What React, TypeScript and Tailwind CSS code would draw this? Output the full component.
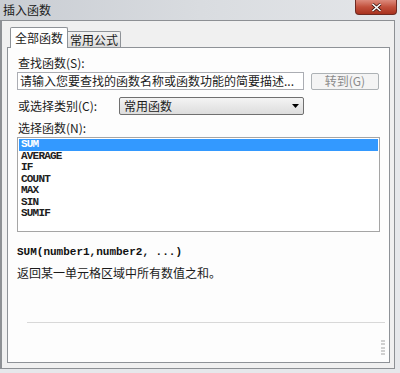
const uiFont = { fontFamily: '"Noto Sans CJK SC", "Liberation Sans", sans-serif' };

const functions = ['SUM', 'AVERAGE', 'IF', 'COUNT', 'MAX', 'SIN', 'SUMIF'];

export default function App() {
  return (
    <div
      className="w-[400px] h-[373px] bg-[#e6e8eb] flex flex-col overflow-hidden text-[12px] text-[#1b1b1b]"
      style={uiFont}
    >
      {/* title bar */}
      <div className="h-[20px] flex items-start justify-between bg-gradient-to-r from-[#c9cdd3] via-[#d9dce0] to-[#e4e6e9]">
        <span className="pl-[3px] pt-[2px] leading-[16px] text-[12px] text-[#202020]">插入函数</span>
        <div className="mr-[3px] w-[42px] h-[15px] flex items-center justify-center rounded-b-[4px] border border-t-0 border-[#6e2a22] bg-gradient-to-b from-[#dc8a7c] via-[#c2503c] to-[#a8321f]">
          <svg width="11" height="9" viewBox="0 0 11 9">
            <path d="M1.5 1 L9.5 8 M9.5 1 L1.5 8" stroke="#3b1510" strokeWidth="3" />
            <path d="M1.5 1 L9.5 8 M9.5 1 L1.5 8" stroke="#ffffff" strokeWidth="1.6" />
          </svg>
        </div>
      </div>

      {/* client area */}
      <div className="w-[395px] h-[349px] border-l-2 border-r border-b border-t border-[#8d9094] bg-[#f0f0f0] flex flex-col pl-[5px] pr-[4px]">
        {/* tabs */}
        <div className="h-[26px] flex items-end pl-[3px]">
          <div className="relative z-10 w-[58px] h-[21px] -mb-px bg-white border border-b-0 border-[#8e9297] rounded-t-[2px] flex items-center justify-center">
            <span className="leading-[14px]">全部函数</span>
          </div>
          <div className="w-[53px] h-[16px] border border-l-0 border-b-0 border-[#8e9297] rounded-tr-[2px] bg-gradient-to-b from-[#f2f2f2] to-[#dcdcdc] flex items-center justify-center">
            <span className="leading-[14px]">常用公式</span>
          </div>
        </div>

        {/* panel */}
        <div className="w-[383px] h-[316px] bg-[#fdfdfd] border border-[#8e9297] flex flex-col pl-[9px] pr-[9px]">
          <div className="mt-[8px] pl-[1px] leading-[13px]">查找函数(S):</div>
          <div className="mt-[3px] flex items-center">
            <div className="w-[287px] h-[18px] border border-[#abadb3] bg-white flex items-center pl-[2px] leading-[14px] whitespace-nowrap overflow-hidden">
              请输入您要查找的函数名称或函数功能的简要描述...
            </div>
            <div className="ml-[7px] w-[68px] h-[17px] border border-[#adb2b5] rounded-[2px] bg-[#f4f4f4] text-[#8b8b8b] flex items-center justify-center leading-[14px]">
              转到(G)
            </div>
          </div>

          <div className="mt-[7px] flex items-center">
            <span className="w-[102px] pl-[1px] leading-[14px]">或选择类别(C):</span>
            <div className="w-[185px] h-[18px] border border-[#707070] rounded-[2px] bg-gradient-to-b from-[#f4f4f4] to-[#dddddd] flex items-center justify-between pl-[4px] pr-[4px]">
              <span className="leading-[14px]">常用函数</span>
              <svg width="7" height="4" viewBox="0 0 7 4">
                <path d="M0 0 L7 0 L3.5 4 Z" fill="#000" />
              </svg>
            </div>
          </div>

          <div className="mt-[6px] pl-[1px] leading-[13px]">选择函数(N):</div>
          <div
            className="mt-[3px] w-[363px] h-[95px] border border-[#a5a5a5] bg-white p-[1px] text-[11px] font-bold tracking-[-0.8px]"
            style={{ fontFamily: '"Liberation Mono", monospace' }}
          >
            {functions.map((f, i) => (
              <div
                key={f}
                className={`h-[11.5px] leading-[11.5px] pl-[2px] ${i === 0 ? 'bg-[#3399ff] text-white' : 'text-[#202020]'}`}
              >
                {f}
              </div>
            ))}
          </div>

          <div
            className="mt-[14px] text-[11px] font-bold leading-[13px] text-[#111]"
            style={{ fontFamily: '"Liberation Mono", monospace' }}
          >
            SUM(number1,number2, ...)
          </div>
          <div className="mt-[7px] leading-[14px]">返回某一单元格区域中所有数值之和。</div>

          <div className="mt-[42px] ml-[10px] w-[358px] h-px bg-[#d8d8d8]"></div>
          <div className="mt-[17px] flex justify-end -mr-[5px]">
            <div className="w-[4px] h-[15px] flex flex-col justify-between">
              {[0, 1, 2, 3, 4].map((d) => (
                <div key={d} className="w-[4px] h-[2px] bg-[#d0d0d0]"></div>
              ))}
            </div>
          </div>
        </div>
      </div>
    </div>
  );
}
